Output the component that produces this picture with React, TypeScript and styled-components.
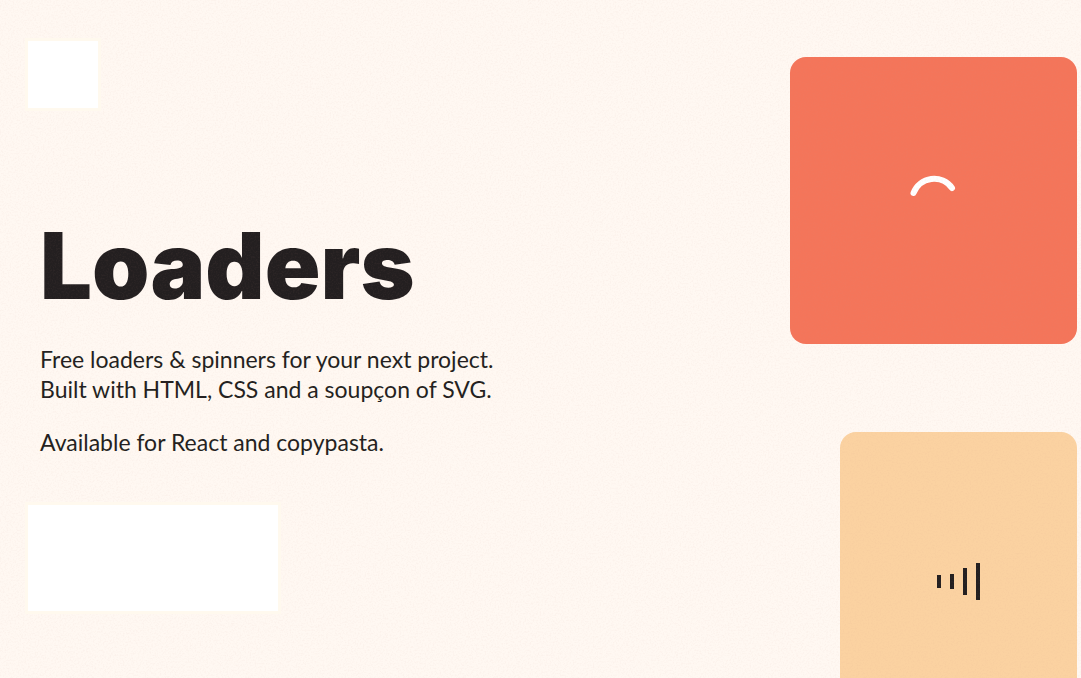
import React from "react";
import styled, { createGlobalStyle } from "styled-components";

const ink = "#231f20";

const GlobalStyle = createGlobalStyle`
  * { box-sizing: border-box; }
  body {
    margin: 0;
    background: #fff8f2;
    color: ${ink};
    font-family: Lato, "Liberation Sans", sans-serif;
  }
`;

const Page = styled.main`
  position: relative;
  display: flex;
  justify-content: space-between;
  height: 100vh;
  overflow: hidden;
`;

const Intro = styled.section`
  display: flex;
  flex-direction: column;
  align-items: flex-start;
  padding: 41px 28px 0;
`;

const Block = styled.div<{ $width: number; $height: number }>`
  position: relative;
  z-index: 1;
  width: ${(p) => p.$width}px;
  height: ${(p) => p.$height}px;
  flex: none;
  background: #fff;
  box-shadow: 0 0 0 3px #fff9ee;
`;

const Copy = styled.div`
  padding: 106px 12px 48px;
`;

const Title = styled.h1`
  margin: 0 0 26px;
  font-family: Inter, "Liberation Sans", sans-serif;
  font-size: 92px;
  font-weight: 900;
  line-height: 104px;
`;

const Text = styled.p`
  margin: 0 0 23px;
  font-size: 23px;
  line-height: 30px;
  &:last-child { margin-bottom: 0; }
`;

const Showcase = styled.section`
  display: flex;
  flex-direction: column;
  align-items: flex-end;
  gap: 88px;
  padding: 57px 4px 0 0;
`;

const Card = styled.div<{ $width: number; $height: number; $color: string }>`
  display: flex;
  align-items: center;
  justify-content: center;
  flex: none;
  width: ${(p) => p.$width}px;
  height: ${(p) => p.$height}px;
  border-radius: 16px;
  background: ${(p) => p.$color};
`;

const Bars = styled.div`
  display: flex;
  align-items: center;
  gap: 9px;
`;

const Bar = styled.span<{ $height: number }>`
  width: 4px;
  height: ${(p) => p.$height}px;
  background: ${ink};
`;

const Grain = styled.svg`
  position: absolute;
  inset: 0;
  width: 100%;
  height: 100%;
  opacity: 0.05;
  pointer-events: none;
`;

export default function App() {
  return (
    <>
      <GlobalStyle />
      <Page>
        <Intro>
          <Block $width={70} $height={67} />
          <Copy>
            <Title>Loaders</Title>
            <Text>
              Free loaders &amp; spinners for your next project.
              <br />
              Built with HTML, CSS and a soupçon of SVG.
            </Text>
            <Text>Available for React and copypasta.</Text>
          </Copy>
          <Block $width={250} $height={106} />
        </Intro>
        <Showcase>
          <Card $width={287} $height={287} $color="#f4755a">
            <svg width="51" height="51" viewBox="0 0 51 51" fill="none" aria-label="Loading">
              <path
                d="M5.5 18A22 22 0 0 1 44 13"
                stroke="#fff"
                strokeWidth="6"
                strokeLinecap="round"
              />
            </svg>
          </Card>
          <Card $width={237} $height={299} $color="#fbd2a1">
            <Bars>
              <Bar $height={13} />
              <Bar $height={15} />
              <Bar $height={27} />
              <Bar $height={37} />
            </Bars>
          </Card>
        </Showcase>
        <Grain aria-hidden="true">
          <filter id="grain">
            <feTurbulence type="fractalNoise" baseFrequency="0.6" numOctaves="3" />
            <feColorMatrix values="0 0 0 0 0.6  0 0 0 0 0.3  0 0 0 0 0.25  3 0 0 0 -1.3" />
          </filter>
          <rect width="100%" height="100%" filter="url(#grain)" />
        </Grain>
      </Page>
    </>
  );
}
